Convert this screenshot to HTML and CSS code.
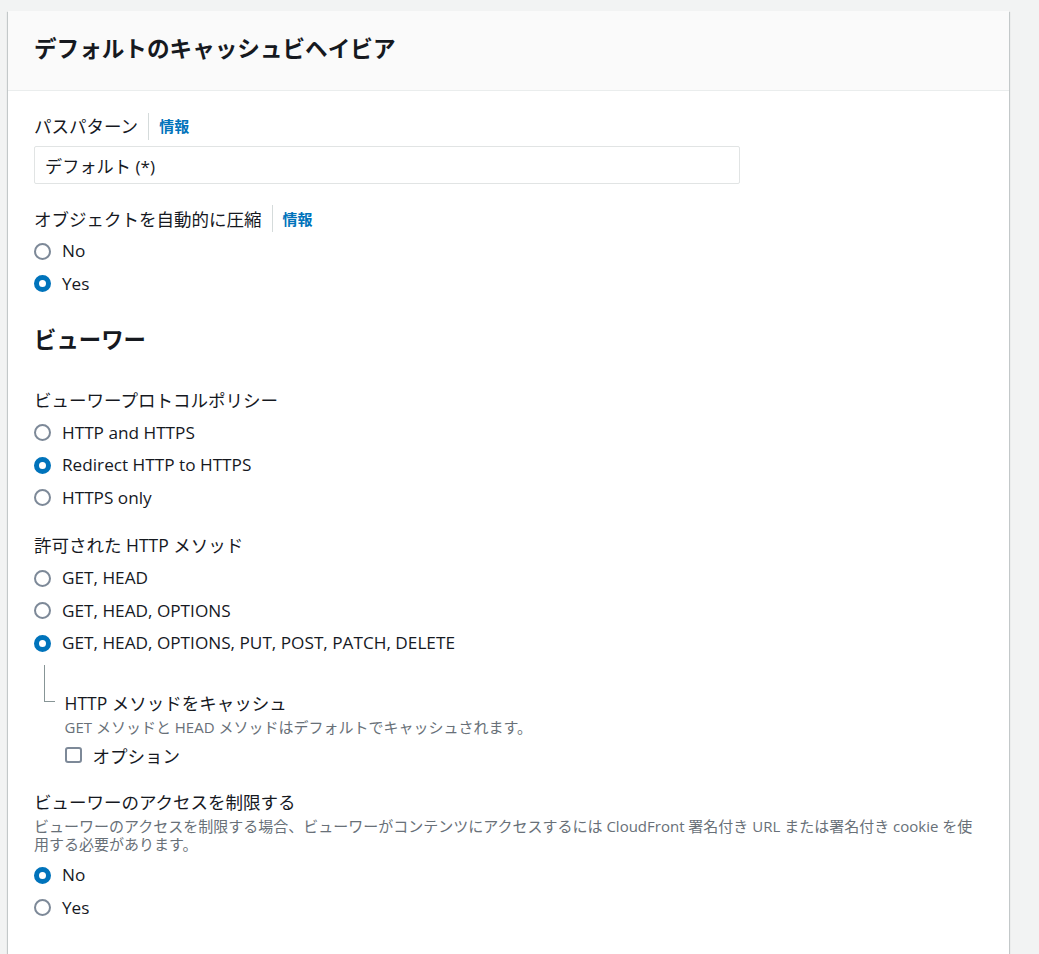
FILE: index.html
```html
<!DOCTYPE html>
<html lang="ja">
<head>
<meta charset="utf-8">
<title>デフォルトのキャッシュビヘイビア</title>
<link rel="stylesheet" href="styles.css">
</head>
<body>
<div class="panel">
  <div class="panel-header">
    <h2 class="panel-title">デフォルトのキャッシュビヘイビア</h2>
  </div>
  <div class="panel-body">
    <div class="field first">
      <div class="label-row"><span class="label">パスパターン</span><a class="info">情報</a></div>
      <div class="input">デフォルト (*)</div>
    </div>

    <div class="field">
      <div class="label-row"><span class="label">オブジェクトを自動的に圧縮</span><a class="info">情報</a></div>
      <div class="radios">
        <div class="radio-row"><span class="radio"></span><span>No</span></div>
        <div class="radio-row"><span class="radio checked"></span><span>Yes</span></div>
      </div>
    </div>

    <h3 class="section-title">ビューワー</h3>

    <div class="field first">
      <div class="label-row"><span class="label">ビューワープロトコルポリシー</span></div>
      <div class="radios">
        <div class="radio-row"><span class="radio"></span><span>HTTP and HTTPS</span></div>
        <div class="radio-row"><span class="radio checked"></span><span>Redirect HTTP to HTTPS</span></div>
        <div class="radio-row"><span class="radio"></span><span>HTTPS only</span></div>
      </div>
    </div>

    <div class="field methods">
      <div class="label-row"><span class="label">許可された HTTP メソッド</span></div>
      <div class="radios">
        <div class="radio-row"><span class="radio"></span><span>GET, HEAD</span></div>
        <div class="radio-row"><span class="radio"></span><span>GET, HEAD, OPTIONS</span></div>
        <div class="radio-row"><span class="radio checked"></span><span>GET, HEAD, OPTIONS, PUT, POST, PATCH, DELETE</span></div>
      </div>
      <div class="nested">
        <div class="connector"><div class="connector-line"></div></div>
        <div class="nested-content">
          <div class="nested-label">HTTP メソッドをキャッシュ</div>
          <div class="desc">GET メソッドと HEAD メソッドはデフォルトでキャッシュされます。</div>
          <div class="check-row"><span class="checkbox"></span><span>オプション</span></div>
        </div>
      </div>
    </div>

    <div class="field restrict">
      <div class="label-row"><span class="label">ビューワーのアクセスを制限する</span></div>
      <div class="desc wide">ビューワーのアクセスを制限する場合、ビューワーがコンテンツにアクセスするには CloudFront 署名付き URL または署名付き cookie を使用する必要があります。</div>
      <div class="radios after-desc">
        <div class="radio-row"><span class="radio checked"></span><span>No</span></div>
        <div class="radio-row"><span class="radio"></span><span>Yes</span></div>
      </div>
    </div>
  </div>
</div>
</body>
</html>
```

FILE: styles.css
```css
html, body {
  margin: 0;
  padding: 0;
}
body {
  background: #f2f3f3;
  font-family: "Open Sans", "Noto Sans CJK JP", sans-serif;
  font-size: 17.2px;
  color: #16191f;
  overflow: hidden;
}
.panel {
  margin: 11px 0 0 8px;
  width: 1001px;
  background: #ffffff;
  box-shadow: 0 1px 1px 0 rgba(0, 28, 36, 0.3), 1px 1px 1px 0 rgba(0, 28, 36, 0.15), -1px 1px 1px 0 rgba(0, 28, 36, 0.15);
}
.panel-header {
  background: #fafafa;
  border-bottom: 1px solid #eaeded;
  padding: 22px 26px 27px;
}
.panel-title {
  margin: 0;
  font-size: 22.6px;
  line-height: 30px;
  font-weight: 700;
  font-family: "Noto Sans CJK JP", sans-serif;
}
.panel-body {
  padding: 21.5px 26px 60px;
}
.field {
  margin-top: 21px;
}
.field.first {
  margin-top: 0;
}
.field.methods {
  margin-top: 22.5px;
}
.field.restrict {
  margin-top: 22.5px;
}
.label-row {
  height: 27px;
  display: flex;
  align-items: center;
  line-height: 22px;
}
.label {
  font-size: 17.5px;
}
.info {
  display: flex;
  align-items: center;
  height: 27px;
  margin-left: 10px;
  padding-left: 10px;
  border-left: 1px solid #d5dbdb;
  color: #0073bb;
  font-weight: 700;
  font-size: 15px;
  font-family: "Noto Sans CJK JP", sans-serif;
}
.input {
  margin-top: 6.5px;
  width: 706px;
  height: 38px;
  box-sizing: border-box;
  border: 1px solid #e1e4e4;
  border-radius: 2px;
  padding: 0 10px;
  display: flex;
  align-items: center;
}
.radios {
  margin-top: 8px;
  display: flex;
  flex-direction: column;
  gap: 10.5px;
}
.methods .radios {
  margin-top: 9px;
}
.radios.after-desc {
  margin-top: 11px;
}
.radio-row {
  display: flex;
  align-items: center;
  height: 22px;
  line-height: 22px;
}
.radio {
  width: 17px;
  height: 17px;
  box-sizing: border-box;
  border: 2px solid #7d8998;
  border-radius: 50%;
  margin-right: 11px;
  flex: none;
}
.radio.checked {
  border: 5.5px solid #0073bb;
  background: #ffffff;
}
.section-title {
  margin: 29.5px 0 34.5px;
  font-size: 22.4px;
  line-height: 28px;
  font-weight: 700;
  font-family: "Noto Sans CJK JP", sans-serif;
}
.nested {
  display: flex;
  margin-top: 10.5px;
}
.connector {
  width: 30.5px;
  flex: none;
}
.connector-line {
  margin-left: 10px;
  width: 11px;
  height: 37px;
  box-sizing: border-box;
  border-left: 1px solid #879596;
  border-bottom: 1px solid #879596;
}
.nested-content {
  padding-top: 27px;
}
.nested-label {
  line-height: 22px;
  font-size: 17.5px;
}
.desc {
  margin-top: 4px;
  font-size: 15px;
  line-height: 18px;
  color: #687078;
}
.desc.wide {
  margin-top: 1.5px;
}
.check-row {
  margin-top: 8.5px;
  display: flex;
  align-items: center;
  height: 22px;
  font-size: 17.5px;
}
.checkbox {
  width: 17px;
  height: 16px;
  box-sizing: border-box;
  border: 2px solid #7d8998;
  border-radius: 3px;
  margin-right: 11px;
  flex: none;
}
```
